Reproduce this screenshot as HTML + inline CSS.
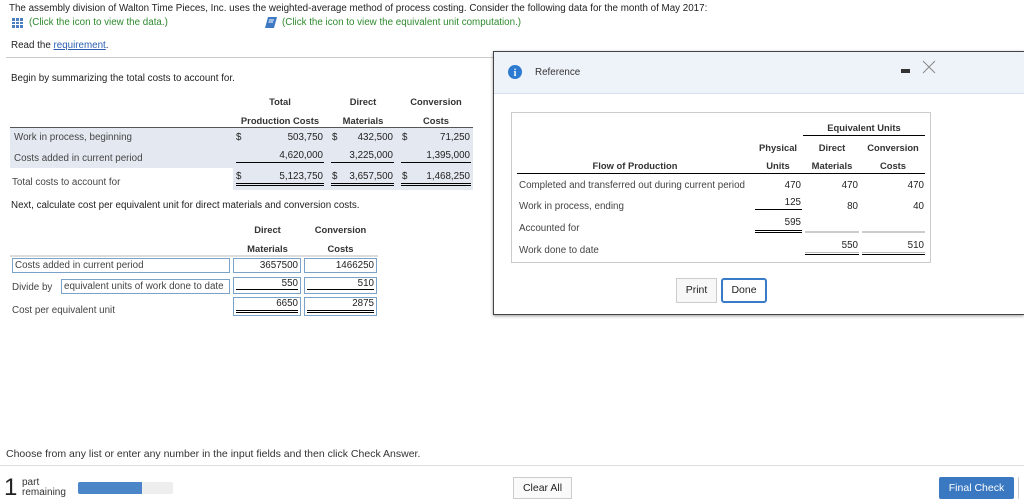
<!DOCTYPE html>
<html><head><meta charset="utf-8"><style>
*{margin:0;padding:0;box-sizing:border-box}
body{width:1024px;height:503px;position:relative;background:#fff;font-family:"Liberation Sans",Arial,sans-serif;font-size:9.8px;color:#222;overflow:hidden}
.a{position:absolute;white-space:nowrap}
.b{font-weight:bold;color:#333;font-size:9.4px}
.c{text-align:center}
.r{text-align:right}
.g{color:#2f8a2f}
.box{position:absolute;border:1px solid #7aa3c7;background:#fff}
.ln{position:absolute;height:1px;background:#000}
.dl{position:absolute;height:3px;border-top:1px solid #000;border-bottom:1px solid #000}
</style></head><body>
<div class="a" style="left:9px;top:3px">The assembly division of Walton Time Pieces, Inc. uses the weighted-average method of process costing. Consider the following data for the month of May 2017:</div>
<svg class="a" style="left:12px;top:18px" width="11" height="10"><rect width="11" height="10" fill="#4a7fc1"/><g stroke="#fff" stroke-width="1"><line x1="0" y1="3.5" x2="11" y2="3.5"/><line x1="0" y1="6.5" x2="11" y2="6.5"/><line x1="3.5" y1="0" x2="3.5" y2="10"/><line x1="7.5" y1="0" x2="7.5" y2="10"/></g></svg>
<div class="a g" style="left:29px;top:17px">(Click the icon to view the data.)</div>
<svg class="a" style="left:264px;top:17px" width="14" height="12"><path d="M4 0 H13 L10 11 H1 Z" fill="#3f79c4"/><path d="M5 3 H10 M4.5 5 H9" stroke="#fff" stroke-width="1"/></svg>
<div class="a g" style="left:282px;top:17px">(Click the icon to view the equivalent unit computation.)</div>
<div class="a" style="left:11px;top:40px">Read the <span style="color:#2a5db0;text-decoration:underline">requirement</span>.</div>
<div class="a" style="left:6px;top:57px;width:1018px;height:1px;background:#ccc"></div>
<div class="a" style="left:11px;top:73px">Begin by summarizing the total costs to account for.</div>

<div class="a b c" style="left:230px;top:96px;width:100px">Total</div>
<div class="a b c" style="left:230px;top:115px;width:100px">Production Costs</div>
<div class="a b c" style="left:332px;top:96px;width:62px">Direct</div>
<div class="a b c" style="left:332px;top:115px;width:62px">Materials</div>
<div class="a b c" style="left:400px;top:96px;width:72px">Conversion</div>
<div class="a b c" style="left:400px;top:115px;width:72px">Costs</div>
<div class="a" style="left:10px;top:127px;width:463px;height:1px;background:#555"></div>
<div class="a" style="left:10px;top:128px;width:463px;height:40px;background:#e4e9f1"></div>
<div class="a" style="left:233px;top:168px;width:240px;height:22px;background:#e4e9f1"></div>
<div class="a" style="left:14px;top:132px;color:#444">Work in process, beginning</div>
<div class="a" style="left:14px;top:153px;color:#444">Costs added in current period</div>
<div class="a" style="left:12px;top:177px;color:#444">Total costs to account for</div>
<div class="a" style="left:236px;top:132px">$</div>
<div class="a r" style="left:250px;top:132px;width:73px">503,750</div>
<div class="a" style="left:332px;top:132px">$</div>
<div class="a r" style="left:340px;top:132px;width:53px">432,500</div>
<div class="a" style="left:402px;top:132px">$</div>
<div class="a r" style="left:410px;top:132px;width:60px">71,250</div>
<div class="a r" style="left:250px;top:150px;width:73px">4,620,000</div>
<div class="a r" style="left:330px;top:150px;width:63px">3,225,000</div>
<div class="a r" style="left:400px;top:150px;width:70px">1,395,000</div>
<div class="ln" style="left:236px;top:162px;width:88px"></div>
<div class="ln" style="left:331px;top:162px;width:63px"></div>
<div class="ln" style="left:401px;top:162px;width:70px"></div>
<div class="a" style="left:236px;top:171px">$</div>
<div class="a r" style="left:250px;top:171px;width:73px">5,123,750</div>
<div class="a" style="left:332px;top:171px">$</div>
<div class="a r" style="left:340px;top:171px;width:53px">3,657,500</div>
<div class="a" style="left:402px;top:171px">$</div>
<div class="a r" style="left:410px;top:171px;width:60px">1,468,250</div>
<div class="dl" style="left:236px;top:183px;width:88px"></div>
<div class="dl" style="left:331px;top:183px;width:63px"></div>
<div class="dl" style="left:401px;top:183px;width:70px"></div>

<div class="a" style="left:11px;top:200px">Next, calculate cost per equivalent unit for direct materials and conversion costs.</div>
<div class="a b c" style="left:234px;top:224px;width:67px">Direct</div>
<div class="a b c" style="left:234px;top:243px;width:67px">Materials</div>
<div class="a b c" style="left:304px;top:224px;width:73px">Conversion</div>
<div class="a b c" style="left:304px;top:243px;width:73px">Costs</div>
<div class="a" style="left:10px;top:255px;width:368px;height:2px;background:#ddd"></div>
<div class="box" style="left:12px;top:258px;width:218px;height:15px;padding:1px 2px;color:#444">Costs added in current period</div>
<div class="box r" style="left:233px;top:258px;width:68px;height:15px;padding:1px 2px">3657500</div>
<div class="box r" style="left:304px;top:258px;width:73px;height:15px;padding:1px 2px">1466250</div>
<div class="a" style="left:12px;top:282px;color:#444">Divide by</div>
<div class="box" style="left:61px;top:279px;width:169px;height:15px;padding:1px 2px;color:#444">equivalent units of work done to date</div>
<div class="box r" style="left:233px;top:277px;width:68px;height:17px;padding:0 2px">550</div>
<div class="box r" style="left:304px;top:277px;width:73px;height:17px;padding:0 2px">510</div>
<div class="ln" style="left:236px;top:289px;width:62px"></div>
<div class="ln" style="left:307px;top:289px;width:67px"></div>
<div class="a" style="left:12px;top:305px;color:#444">Cost per equivalent unit</div>
<div class="box r" style="left:233px;top:297px;width:68px;height:19px;padding:0 2px">6650</div>
<div class="box r" style="left:304px;top:297px;width:73px;height:19px;padding:0 2px">2875</div>
<div class="dl" style="left:236px;top:310px;width:62px"></div>
<div class="dl" style="left:307px;top:310px;width:67px"></div>

<!-- modal -->
<div class="a" style="left:493px;top:51px;width:531px;height:264px;border:1px solid #444;border-right:none;background:#fff;box-shadow:0 1px 3px rgba(0,0,0,.4)"></div>
<div class="a" style="left:494px;top:52px;width:530px;height:42px;background:#eef3fa;border-bottom:1px solid #d5e0ee"></div>
<svg class="a" style="left:508px;top:65px" width="14" height="14"><circle cx="7" cy="7" r="7" fill="#2d7bd0"/><text x="7" y="11" fill="#fff" font-size="10" font-weight="bold" font-family="Liberation Serif" text-anchor="middle">i</text></svg>
<div class="a" style="left:535px;top:67px;color:#333">Reference</div>
<div class="a" style="left:901px;top:69px;width:9px;height:4px;background:#333"></div>
<svg class="a" style="left:922px;top:60px" width="14" height="14"><path d="M1 1 L13 13 M13 1 L1 13" stroke="#888" stroke-width="1"/></svg>
<div class="a" style="left:511px;top:112px;width:420px;height:151px;border:1px solid #ccc"></div>
<div class="a b c" style="left:803px;top:122px;width:122px">Equivalent Units</div>
<div class="ln" style="left:803px;top:135px;width:122px"></div>
<div class="a b c" style="left:755px;top:142px;width:46px">Physical</div>
<div class="a b c" style="left:755px;top:160px;width:46px">Units</div>
<div class="a b c" style="left:805px;top:142px;width:54px">Direct</div>
<div class="a b c" style="left:805px;top:160px;width:54px">Materials</div>
<div class="a b c" style="left:862px;top:142px;width:62px">Conversion</div>
<div class="a b c" style="left:862px;top:160px;width:62px">Costs</div>
<div class="a b c" style="left:517px;top:160px;width:236px">Flow of Production</div>
<div class="ln" style="left:517px;top:173px;width:408px"></div>
<div class="a" style="left:519px;top:180px;color:#444">Completed and transferred out during current period</div>
<div class="a r" style="left:755px;top:180px;width:46px">470</div>
<div class="a r" style="left:805px;top:180px;width:53px">470</div>
<div class="a r" style="left:862px;top:180px;width:62px">470</div>
<div class="a" style="left:519px;top:201px;color:#444">Work in process, ending</div>
<div class="a r" style="left:755px;top:197px;width:46px">125</div>
<div class="a r" style="left:805px;top:201px;width:53px">80</div>
<div class="a r" style="left:862px;top:201px;width:62px">40</div>
<div class="ln" style="left:755px;top:209px;width:47px"></div>
<div class="a" style="left:519px;top:223px;color:#444">Accounted for</div>
<div class="a r" style="left:755px;top:217px;width:46px">595</div>
<div class="dl" style="left:755px;top:230px;width:47px"></div>
<div class="a" style="left:805px;top:231px;width:54px;height:2px;background:#ccc"></div>
<div class="a" style="left:862px;top:231px;width:63px;height:2px;background:#ccc"></div>
<div class="a" style="left:519px;top:245px;color:#444">Work done to date</div>
<div class="a r" style="left:805px;top:240px;width:53px">550</div>
<div class="a r" style="left:862px;top:240px;width:62px">510</div>
<div class="dl" style="left:805px;top:252px;width:54px;border-top-color:#bbb"></div>
<div class="dl" style="left:862px;top:252px;width:63px;border-top-color:#bbb"></div>
<div class="a c" style="left:676px;top:278px;width:41px;height:25px;line-height:23px;border:1px solid #ccc;background:#f7f7f7;font-size:10.5px">Print</div>
<div class="a c" style="left:721px;top:278px;width:46px;height:25px;line-height:21px;border:2px solid #3a7bc8;border-radius:3px;font-size:10.5px">Done</div>

<!-- footer -->
<div class="a" style="left:6px;top:448px;color:#333;font-size:10.5px">Choose from any list or enter any number in the input fields and then click Check Answer.</div>
<div class="a" style="left:0;top:465px;width:1024px;height:1px;background:#ddd"></div>
<div class="a" style="left:4px;top:476px;font-size:24px;line-height:24px">1</div>
<div class="a" style="left:22px;top:478px;line-height:10px;color:#333;font-size:10px">part<br>remaining</div>
<div class="a" style="left:78px;top:482px;width:95px;height:12px;background:#eee;border-radius:2px"></div>
<div class="a" style="left:78px;top:482px;width:64px;height:12px;background:#4a86c8;border-radius:2px 0 0 2px"></div>
<div class="a c" style="left:513px;top:477px;width:59px;height:22px;line-height:20px;border:1px solid #ccc;background:#fafafa;font-size:10.5px">Clear All</div>
<div class="a c" style="left:939px;top:477px;width:75px;height:22px;line-height:22px;background:#3b78c2;color:#fff;font-size:10.5px;border-radius:2px">Final Check</div>
<div class="a" style="left:1018px;top:477px;width:1px;height:22px;background:#ccc"></div>
</body></html>
